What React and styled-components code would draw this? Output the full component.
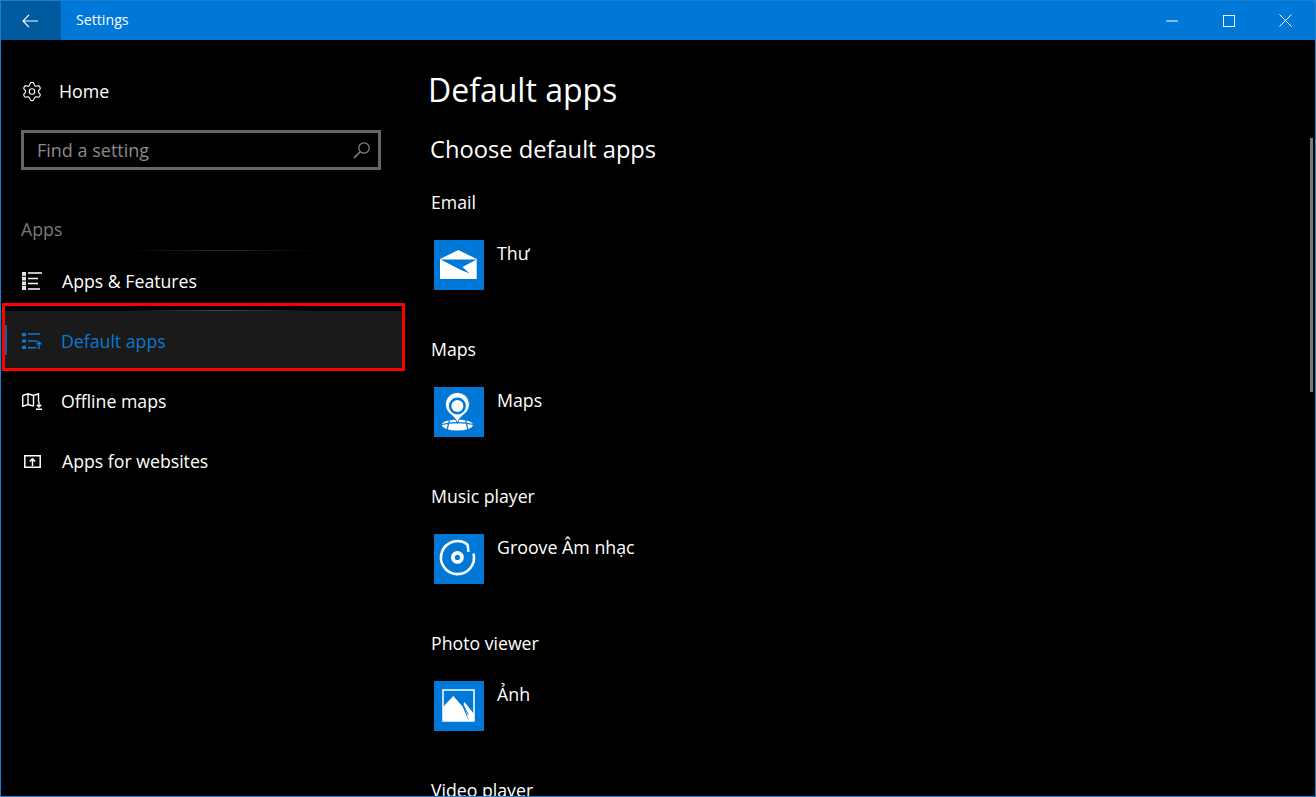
import React from 'react';
import styled, { createGlobalStyle } from 'styled-components';
import { Settings as Gear } from 'lucide-react';

const GlobalStyle = createGlobalStyle`
  html, body {
    margin: 0;
    padding: 0;
    background: #000;
    overflow: hidden;
  }
  * {
    box-sizing: border-box;
  }
`;

const Window = styled.div`
  position: relative;
  width: 1316px;
  height: 797px;
  display: flex;
  flex-direction: column;
  overflow: hidden;
  background: #000;
  border: 1px solid #1f7fd0;
  color: #fff;
  font-family: 'Open Sans', 'Noto Sans', sans-serif;
`;

const TitleBar = styled.div`
  height: 39px;
  flex: none;
  display: flex;
  align-items: center;
  padding-right: 1px;
  background: #0078d7;
`;

const BackButton = styled.div`
  width: 60px;
  height: 100%;
  display: flex;
  align-items: center;
  justify-content: center;
  padding-right: 2px;
  background: #005a9e;
`;

const WindowTitle = styled.div`
  margin: 0 0 2px 15px;
  font-size: 14.2px;
  flex: 1;
`;

const Caption = styled.div`
  width: 57px;
  height: 100%;
  display: flex;
  align-items: center;
  justify-content: center;
`;

const Body = styled.div`
  flex: 1;
  display: flex;
  min-height: 0;
`;

const Sidebar = styled.nav`
  width: 404px;
  flex: none;
  padding-top: 27px;
`;

const HomeRow = styled.div`
  height: 48px;
  display: flex;
  align-items: center;
  padding-left: 20px;
  gap: 16px;
  font-size: 17.8px;
`;

const SearchBox = styled.div`
  margin: 15px 24px 0 20px;
  height: 40px;
  border: 3px solid #666;
  display: flex;
  align-items: center;
  justify-content: space-between;
  padding: 0 7px 0 13px;
  font-size: 18px;
  color: #8a8a8a;
`;

const SectionLabel = styled.div`
  margin: 46px 0 0 20px;
  height: 35px;
  font-size: 17.8px;
  line-height: 26px;
  color: #7a7a7a;
`;

const NavItem = styled.div`
  position: relative;
  height: 60px;
  display: flex;
  align-items: center;
  padding-left: 20px;
  gap: ${p => (p.$tight ? 18 : 19)}px;
  font-size: 17.7px;
  color: ${p => (p.$active ? '#0a78d2' : '#fff')};
  background: ${p => (p.$active ? '#1a1a1a' : 'transparent')};
`;

const ActiveBar = styled.span`
  position: absolute;
  left: 3px;
  top: 14px;
  width: 3px;
  height: 30px;
  background: #0a62ad;
`;

const RedBox = styled.span`
  position: absolute;
  left: 1px;
  top: -8px;
  right: 0;
  bottom: 0;
  border: 3px solid #f00;
  pointer-events: none;
`;

const Glow = styled.span`
  position: absolute;
  left: 120px;
  width: 200px;
  top: ${p => p.$top}px;
  height: 1px;
  background: linear-gradient(90deg, transparent, ${p => p.$color}, transparent);
`;

const IconSlot = styled.span`
  width: 22px;
  height: 22px;
  flex: none;
  display: flex;
  align-items: center;
  justify-content: center;
`;

const Main = styled.main`
  flex: 1;
  padding: 24px 0 0 23px;
  min-width: 0;
  overflow: hidden;
`;

const PageTitle = styled.h1`
  margin: 0;
  height: 52px;
  font-size: 32px;
  font-weight: 400;
  line-height: 52px;
`;

const SubTitle = styled.h2`
  margin: 15px 0 0 2px;
  height: 36px;
  font-size: 23.7px;
  font-weight: 400;
  line-height: 36px;
`;

const Group = styled.section`
  margin-left: 3px;
  height: 147px;
  &:first-of-type {
    margin-top: 21px;
  }
`;

const GroupLabel = styled.div`
  height: 28px;
  font-size: 17.7px;
  line-height: 28px;
`;

const AppRow = styled.div`
  display: flex;
  margin: 24px 0 0 3px;
  gap: 13px;
`;

const AppTile = styled.div`
  width: 50px;
  height: 50px;
  flex: none;
  background: #0078d7;
`;

const AppName = styled.div`
  font-size: 17.8px;
  line-height: 26px;
`;

const ScrollThumb = styled.div`
  position: absolute;
  top: 137px;
  left: 1309px;
  width: 3px;
  height: 254px;
  background: #7a7a7a;
`;

const Line = ({ d, w = 1.4 }) => <path d={d} fill="none" stroke="currentColor" strokeWidth={w} />;

const BackIcon = () => (
  <svg width="16" height="14" viewBox="0 0 16 14">
    <path d="M7 .8 1 7l6 6.2M1 7h15" fill="none" stroke="#fff" strokeWidth="1.2" />
  </svg>
);

const SearchIcon = () => (
  <svg width="18" height="18" viewBox="0 0 18 18">
    <circle cx="11" cy="7" r="5.2" fill="none" stroke="#8a8a8a" strokeWidth="1.2" />
    <path d="M7.2 10.8 1 17" stroke="#8a8a8a" strokeWidth="1.4" />
  </svg>
);

const FeaturesIcon = () => (
  <svg width="20" height="18" viewBox="0 0 20 18">
    <path d="M0 0h4v3.800H0zM0 4.700h4v3.800H0zM0 9.400h4v3.800H0zM0 14.100h4v3.800H0z" fill="#e8e8e8" />
    <Line d="M6 1h14M6 6.500h10M6 11.500h10M6 17h12" w={1.7} />
  </svg>
);

const DefaultsIcon = () => (
  <svg width="20" height="16" viewBox="0 0 20 16" color="#0a78d2">
    <path d="M0 0h4v3.200H0zM0 6.400h4v3.200H0zM0 12.800h4v3.200H0z" fill="#0a78d2" />
    <Line d="M6 1h12M6 8h9.500M6 14.800h8.500M17 16V9M14.600 11.400 17 9l2.400 2.400" w={1.5} />
  </svg>
);

const MapIcon = () => (
  <svg width="21" height="17" viewBox="0 0 21 17">
    <Line d="M.7 2.500 6 .8l5.500 1.700L16.500.8v8M.7 2.500v10.700L6 11.500l5.500 1.700M6 .8v10.700M11.500 2.500v10.700" />
    <Line d="M17 8.500v5.500M14.800 11.800l2.200 2.200 2.200-2.200M14 16.200h6" />
  </svg>
);

const WebIcon = () => (
  <svg width="17" height="13" viewBox="0 0 17 13">
    <Line d="M5 .8H.8v11.400h15.400V.8H12M.8.8h15.400" w={1.5} />
    <Line d="M8.500 11V4M5.800 6.500l2.700-2.700 2.700 2.700" w={1.5} />
  </svg>
);

const MailTile = () => (
  <svg width="50" height="50" viewBox="0 0 50 50">
    <path d="M6 19 24.300 10 42.700 19v20H6z" fill="#fff" />
    <path d="M6.500 19.500h36L28.500 27l7 6.500-8.500-3.500z" fill="#0078d7" />
  </svg>
);

const MapsTile = () => (
  <svg width="50" height="50" viewBox="0 0 50 50">
    <ellipse cx="23.400" cy="38" rx="15.500" ry="5.500" fill="#fff" />
    <path d="M8 37.500c9-2.500 22-2.500 31 0M15.500 33l-2.500 10M31.500 33l2.500 10" fill="none" stroke="#0078d7" strokeWidth="1.200" />
    <path d="M23.400 36.500c-1-4-3.600-6.500-6.600-9a12 12 0 1 1 13.200 0c-3 2.500-5.600 5-6.600 9z" fill="#fff" stroke="#0078d7" strokeWidth="1" />
    <circle cx="23.400" cy="19" r="8.500" fill="#0078d7" />
    <circle cx="23.400" cy="19" r="6" fill="#fff" />
  </svg>
);

const GrooveTile = () => (
  <svg width="50" height="50" viewBox="0 0 50 50">
    <path d="M33.500 10.500A16.500 16.500 0 1 0 39.500 19.500" fill="none" stroke="#fff" strokeWidth="2.600" />
    <path d="M33.500 10 34.500 18" fill="none" stroke="#fff" strokeWidth="2.400" />
    <circle cx="23.400" cy="23.400" r="4.500" fill="none" stroke="#fff" strokeWidth="3.800" />
  </svg>
);

const PhotoTile = () => (
  <svg width="50" height="50" viewBox="0 0 50 50">
    <rect x="9" y="9" width="31" height="31" fill="none" stroke="#fff" strokeWidth="1.500" />
    <path d="M9 26 19.300 15 28.500 25.500 35 40H9z" fill="#fff" />
    <path d="M29.500 23l1-2 9.500 12v7h-5z" fill="#fff" />
    <path d="M28.700 23.300 34.300 33.600" fill="none" stroke="#0078d7" strokeWidth="1" />
  </svg>
);

const navItems = [
  { label: 'Apps & Features', icon: <FeaturesIcon /> },
  { label: 'Default apps', icon: <DefaultsIcon />, active: true, tight: true },
  { label: 'Offline maps', icon: <MapIcon />, tight: true },
  { label: 'Apps for websites', icon: <WebIcon /> },
];

const groups = [
  { label: 'Email', app: 'Thư', tile: <MailTile /> },
  { label: 'Maps', app: 'Maps', tile: <MapsTile /> },
  { label: 'Music player', app: 'Groove Âm nhạc', tile: <GrooveTile /> },
  { label: 'Photo viewer', app: 'Ảnh', tile: <PhotoTile /> },
  { label: 'Video player' },
];

const App = () => (
  <Window>
    <GlobalStyle />
    <TitleBar>
      <BackButton><BackIcon /></BackButton>
      <WindowTitle>Settings</WindowTitle>
      <Caption>
        <svg width="12" height="2" viewBox="0 0 12 2"><path d="M0 1h12" stroke="#fff" /></svg>
      </Caption>
      <Caption>
        <svg width="12" height="12" viewBox="0 0 12 12"><rect x=".5" y=".5" width="11" height="11" fill="none" stroke="#fff" /></svg>
      </Caption>
      <Caption>
        <svg width="13" height="13" viewBox="0 0 13 13"><path d="M.5.5l12 12M12.500.5l-12 12" stroke="#fff" /></svg>
      </Caption>
    </TitleBar>
    <Body>
      <Sidebar>
        <HomeRow>
          <IconSlot><Gear size={23} strokeWidth={1.25} /></IconSlot>
          Home
        </HomeRow>
        <SearchBox>
          Find a setting
          <SearchIcon />
        </SearchBox>
        <SectionLabel>Apps</SectionLabel>
        {navItems.map(item => (
          <NavItem key={item.label} $active={item.active} $tight={item.tight}>
            {item.active && <ActiveBar />}
            {item.active && <RedBox />}
            {item.active && <Glow $top={-1} $color="#4a4a4a" />}
            {item.active && <Glow $top={-61} $color="#2a2a2a" />}
            <IconSlot>{item.icon}</IconSlot>
            {item.label}
          </NavItem>
        ))}
      </Sidebar>
      <Main>
        <PageTitle>Default apps</PageTitle>
        <SubTitle>Choose default apps</SubTitle>
        {groups.map(group => (
          <Group key={group.label}>
            <GroupLabel>{group.label}</GroupLabel>
            {group.app && (
              <AppRow>
                <AppTile>{group.tile}</AppTile>
                <AppName>{group.app}</AppName>
              </AppRow>
            )}
          </Group>
        ))}
      </Main>
    </Body>
    <ScrollThumb />
  </Window>
);

export default App;
